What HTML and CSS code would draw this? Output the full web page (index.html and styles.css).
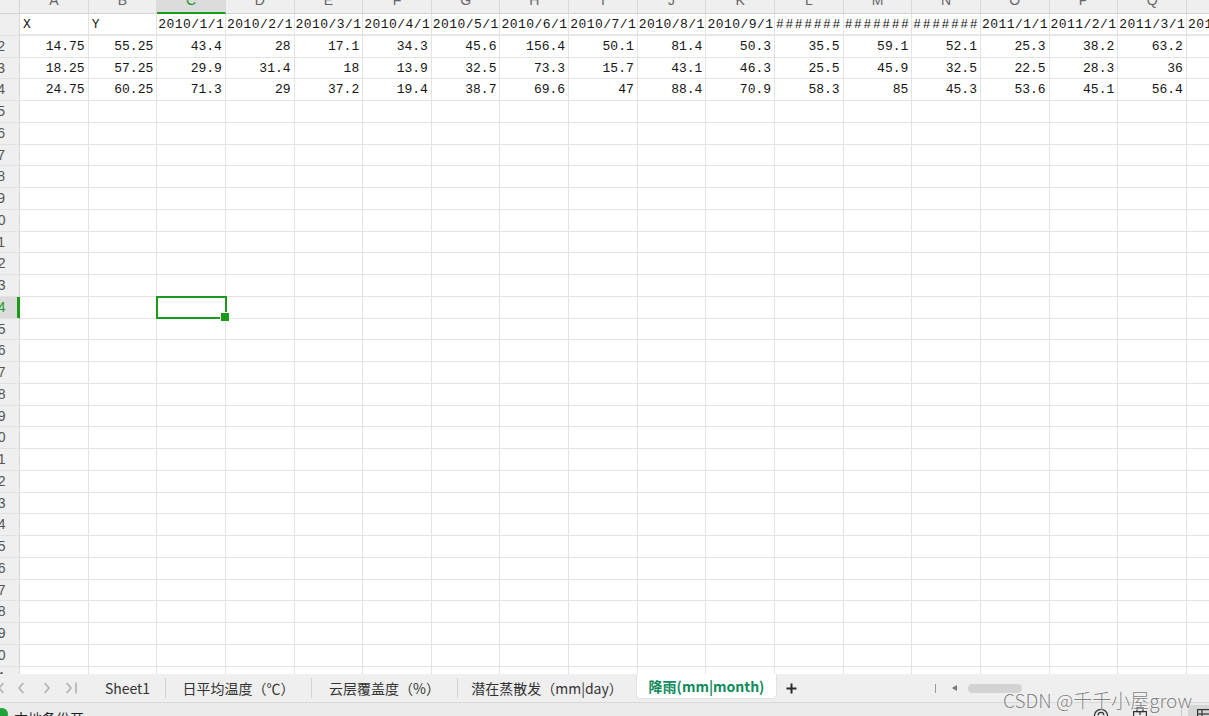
FILE: index.html
```html
<!DOCTYPE html>
<html lang="zh-CN">
<head>
<meta charset="utf-8">
<title>降雨(mm|month)</title>
<link rel="stylesheet" href="styles.css">
</head>
<body>
<div class="app">
  <div class="sheet">
    <div class="grid">
      <div class="row head"><span class="rh corner"></span><span class="c ch">A</span><span class="c ch">B</span><span class="c ch on">C</span><span class="c ch">D</span><span class="c ch">E</span><span class="c ch">F</span><span class="c ch">G</span><span class="c ch">H</span><span class="c ch">I</span><span class="c ch">J</span><span class="c ch">K</span><span class="c ch">L</span><span class="c ch">M</span><span class="c ch">N</span><span class="c ch">O</span><span class="c ch">P</span><span class="c ch">Q</span><span class="c ch">R</span></div>
      <div class="row r1"><span class="rh"></span><span class="c">X</span><span class="c">Y</span><span class="c d">2010/1/1</span><span class="c d">2010/2/1</span><span class="c d">2010/3/1</span><span class="c d">2010/4/1</span><span class="c d">2010/5/1</span><span class="c d">2010/6/1</span><span class="c d">2010/7/1</span><span class="c d">2010/8/1</span><span class="c d">2010/9/1</span><span class="c hash">#######</span><span class="c hash">#######</span><span class="c hash">#######</span><span class="c d">2011/1/1</span><span class="c d">2011/2/1</span><span class="c d">2011/3/1</span><span class="c d">2011/4/1</span></div>
      <div class="row"><span class="rh">2</span><span class="c n">14.75</span><span class="c n">55.25</span><span class="c n">43.4</span><span class="c n">28</span><span class="c n">17.1</span><span class="c n">34.3</span><span class="c n">45.6</span><span class="c n">156.4</span><span class="c n">50.1</span><span class="c n">81.4</span><span class="c n">50.3</span><span class="c n">35.5</span><span class="c n">59.1</span><span class="c n">52.1</span><span class="c n">25.3</span><span class="c n">38.2</span><span class="c n">63.2</span><span class="c n"></span></div>
      <div class="row"><span class="rh">3</span><span class="c n">18.25</span><span class="c n">57.25</span><span class="c n">29.9</span><span class="c n">31.4</span><span class="c n">18</span><span class="c n">13.9</span><span class="c n">32.5</span><span class="c n">73.3</span><span class="c n">15.7</span><span class="c n">43.1</span><span class="c n">46.3</span><span class="c n">25.5</span><span class="c n">45.9</span><span class="c n">32.5</span><span class="c n">22.5</span><span class="c n">28.3</span><span class="c n">36</span><span class="c n"></span></div>
      <div class="row"><span class="rh">4</span><span class="c n">24.75</span><span class="c n">60.25</span><span class="c n">71.3</span><span class="c n">29</span><span class="c n">37.2</span><span class="c n">19.4</span><span class="c n">38.7</span><span class="c n">69.6</span><span class="c n">47</span><span class="c n">88.4</span><span class="c n">70.9</span><span class="c n">58.3</span><span class="c n">85</span><span class="c n">45.3</span><span class="c n">53.6</span><span class="c n">45.1</span><span class="c n">56.4</span><span class="c n"></span></div>
      <div class="row"><span class="rh">5</span><span class="c"></span><span class="c"></span><span class="c"></span><span class="c"></span><span class="c"></span><span class="c"></span><span class="c"></span><span class="c"></span><span class="c"></span><span class="c"></span><span class="c"></span><span class="c"></span><span class="c"></span><span class="c"></span><span class="c"></span><span class="c"></span><span class="c"></span><span class="c"></span></div>
      <div class="row"><span class="rh">6</span><span class="c"></span><span class="c"></span><span class="c"></span><span class="c"></span><span class="c"></span><span class="c"></span><span class="c"></span><span class="c"></span><span class="c"></span><span class="c"></span><span class="c"></span><span class="c"></span><span class="c"></span><span class="c"></span><span class="c"></span><span class="c"></span><span class="c"></span><span class="c"></span></div>
      <div class="row"><span class="rh">7</span><span class="c"></span><span class="c"></span><span class="c"></span><span class="c"></span><span class="c"></span><span class="c"></span><span class="c"></span><span class="c"></span><span class="c"></span><span class="c"></span><span class="c"></span><span class="c"></span><span class="c"></span><span class="c"></span><span class="c"></span><span class="c"></span><span class="c"></span><span class="c"></span></div>
      <div class="row"><span class="rh">8</span><span class="c"></span><span class="c"></span><span class="c"></span><span class="c"></span><span class="c"></span><span class="c"></span><span class="c"></span><span class="c"></span><span class="c"></span><span class="c"></span><span class="c"></span><span class="c"></span><span class="c"></span><span class="c"></span><span class="c"></span><span class="c"></span><span class="c"></span><span class="c"></span></div>
      <div class="row"><span class="rh">9</span><span class="c"></span><span class="c"></span><span class="c"></span><span class="c"></span><span class="c"></span><span class="c"></span><span class="c"></span><span class="c"></span><span class="c"></span><span class="c"></span><span class="c"></span><span class="c"></span><span class="c"></span><span class="c"></span><span class="c"></span><span class="c"></span><span class="c"></span><span class="c"></span></div>
      <div class="row"><span class="rh">10</span><span class="c"></span><span class="c"></span><span class="c"></span><span class="c"></span><span class="c"></span><span class="c"></span><span class="c"></span><span class="c"></span><span class="c"></span><span class="c"></span><span class="c"></span><span class="c"></span><span class="c"></span><span class="c"></span><span class="c"></span><span class="c"></span><span class="c"></span><span class="c"></span></div>
      <div class="row"><span class="rh">11</span><span class="c"></span><span class="c"></span><span class="c"></span><span class="c"></span><span class="c"></span><span class="c"></span><span class="c"></span><span class="c"></span><span class="c"></span><span class="c"></span><span class="c"></span><span class="c"></span><span class="c"></span><span class="c"></span><span class="c"></span><span class="c"></span><span class="c"></span><span class="c"></span></div>
      <div class="row"><span class="rh">12</span><span class="c"></span><span class="c"></span><span class="c"></span><span class="c"></span><span class="c"></span><span class="c"></span><span class="c"></span><span class="c"></span><span class="c"></span><span class="c"></span><span class="c"></span><span class="c"></span><span class="c"></span><span class="c"></span><span class="c"></span><span class="c"></span><span class="c"></span><span class="c"></span></div>
      <div class="row"><span class="rh">13</span><span class="c"></span><span class="c"></span><span class="c"></span><span class="c"></span><span class="c"></span><span class="c"></span><span class="c"></span><span class="c"></span><span class="c"></span><span class="c"></span><span class="c"></span><span class="c"></span><span class="c"></span><span class="c"></span><span class="c"></span><span class="c"></span><span class="c"></span><span class="c"></span></div>
      <div class="row"><span class="rh on">14</span><span class="c"></span><span class="c"></span><span class="c sel"></span><span class="c"></span><span class="c"></span><span class="c"></span><span class="c"></span><span class="c"></span><span class="c"></span><span class="c"></span><span class="c"></span><span class="c"></span><span class="c"></span><span class="c"></span><span class="c"></span><span class="c"></span><span class="c"></span><span class="c"></span></div>
      <div class="row"><span class="rh">15</span><span class="c"></span><span class="c"></span><span class="c"></span><span class="c"></span><span class="c"></span><span class="c"></span><span class="c"></span><span class="c"></span><span class="c"></span><span class="c"></span><span class="c"></span><span class="c"></span><span class="c"></span><span class="c"></span><span class="c"></span><span class="c"></span><span class="c"></span><span class="c"></span></div>
      <div class="row"><span class="rh">16</span><span class="c"></span><span class="c"></span><span class="c"></span><span class="c"></span><span class="c"></span><span class="c"></span><span class="c"></span><span class="c"></span><span class="c"></span><span class="c"></span><span class="c"></span><span class="c"></span><span class="c"></span><span class="c"></span><span class="c"></span><span class="c"></span><span class="c"></span><span class="c"></span></div>
      <div class="row"><span class="rh">17</span><span class="c"></span><span class="c"></span><span class="c"></span><span class="c"></span><span class="c"></span><span class="c"></span><span class="c"></span><span class="c"></span><span class="c"></span><span class="c"></span><span class="c"></span><span class="c"></span><span class="c"></span><span class="c"></span><span class="c"></span><span class="c"></span><span class="c"></span><span class="c"></span></div>
      <div class="row"><span class="rh">18</span><span class="c"></span><span class="c"></span><span class="c"></span><span class="c"></span><span class="c"></span><span class="c"></span><span class="c"></span><span class="c"></span><span class="c"></span><span class="c"></span><span class="c"></span><span class="c"></span><span class="c"></span><span class="c"></span><span class="c"></span><span class="c"></span><span class="c"></span><span class="c"></span></div>
      <div class="row"><span class="rh">19</span><span class="c"></span><span class="c"></span><span class="c"></span><span class="c"></span><span class="c"></span><span class="c"></span><span class="c"></span><span class="c"></span><span class="c"></span><span class="c"></span><span class="c"></span><span class="c"></span><span class="c"></span><span class="c"></span><span class="c"></span><span class="c"></span><span class="c"></span><span class="c"></span></div>
      <div class="row"><span class="rh">20</span><span class="c"></span><span class="c"></span><span class="c"></span><span class="c"></span><span class="c"></span><span class="c"></span><span class="c"></span><span class="c"></span><span class="c"></span><span class="c"></span><span class="c"></span><span class="c"></span><span class="c"></span><span class="c"></span><span class="c"></span><span class="c"></span><span class="c"></span><span class="c"></span></div>
      <div class="row"><span class="rh">21</span><span class="c"></span><span class="c"></span><span class="c"></span><span class="c"></span><span class="c"></span><span class="c"></span><span class="c"></span><span class="c"></span><span class="c"></span><span class="c"></span><span class="c"></span><span class="c"></span><span class="c"></span><span class="c"></span><span class="c"></span><span class="c"></span><span class="c"></span><span class="c"></span></div>
      <div class="row"><span class="rh">22</span><span class="c"></span><span class="c"></span><span class="c"></span><span class="c"></span><span class="c"></span><span class="c"></span><span class="c"></span><span class="c"></span><span class="c"></span><span class="c"></span><span class="c"></span><span class="c"></span><span class="c"></span><span class="c"></span><span class="c"></span><span class="c"></span><span class="c"></span><span class="c"></span></div>
      <div class="row"><span class="rh">23</span><span class="c"></span><span class="c"></span><span class="c"></span><span class="c"></span><span class="c"></span><span class="c"></span><span class="c"></span><span class="c"></span><span class="c"></span><span class="c"></span><span class="c"></span><span class="c"></span><span class="c"></span><span class="c"></span><span class="c"></span><span class="c"></span><span class="c"></span><span class="c"></span></div>
      <div class="row"><span class="rh">24</span><span class="c"></span><span class="c"></span><span class="c"></span><span class="c"></span><span class="c"></span><span class="c"></span><span class="c"></span><span class="c"></span><span class="c"></span><span class="c"></span><span class="c"></span><span class="c"></span><span class="c"></span><span class="c"></span><span class="c"></span><span class="c"></span><span class="c"></span><span class="c"></span></div>
      <div class="row"><span class="rh">25</span><span class="c"></span><span class="c"></span><span class="c"></span><span class="c"></span><span class="c"></span><span class="c"></span><span class="c"></span><span class="c"></span><span class="c"></span><span class="c"></span><span class="c"></span><span class="c"></span><span class="c"></span><span class="c"></span><span class="c"></span><span class="c"></span><span class="c"></span><span class="c"></span></div>
      <div class="row"><span class="rh">26</span><span class="c"></span><span class="c"></span><span class="c"></span><span class="c"></span><span class="c"></span><span class="c"></span><span class="c"></span><span class="c"></span><span class="c"></span><span class="c"></span><span class="c"></span><span class="c"></span><span class="c"></span><span class="c"></span><span class="c"></span><span class="c"></span><span class="c"></span><span class="c"></span></div>
      <div class="row"><span class="rh">27</span><span class="c"></span><span class="c"></span><span class="c"></span><span class="c"></span><span class="c"></span><span class="c"></span><span class="c"></span><span class="c"></span><span class="c"></span><span class="c"></span><span class="c"></span><span class="c"></span><span class="c"></span><span class="c"></span><span class="c"></span><span class="c"></span><span class="c"></span><span class="c"></span></div>
      <div class="row"><span class="rh">28</span><span class="c"></span><span class="c"></span><span class="c"></span><span class="c"></span><span class="c"></span><span class="c"></span><span class="c"></span><span class="c"></span><span class="c"></span><span class="c"></span><span class="c"></span><span class="c"></span><span class="c"></span><span class="c"></span><span class="c"></span><span class="c"></span><span class="c"></span><span class="c"></span></div>
      <div class="row"><span class="rh">29</span><span class="c"></span><span class="c"></span><span class="c"></span><span class="c"></span><span class="c"></span><span class="c"></span><span class="c"></span><span class="c"></span><span class="c"></span><span class="c"></span><span class="c"></span><span class="c"></span><span class="c"></span><span class="c"></span><span class="c"></span><span class="c"></span><span class="c"></span><span class="c"></span></div>
      <div class="row"><span class="rh">30</span><span class="c"></span><span class="c"></span><span class="c"></span><span class="c"></span><span class="c"></span><span class="c"></span><span class="c"></span><span class="c"></span><span class="c"></span><span class="c"></span><span class="c"></span><span class="c"></span><span class="c"></span><span class="c"></span><span class="c"></span><span class="c"></span><span class="c"></span><span class="c"></span></div>
      <div class="row"><span class="rh">31</span><span class="c"></span><span class="c"></span><span class="c"></span><span class="c"></span><span class="c"></span><span class="c"></span><span class="c"></span><span class="c"></span><span class="c"></span><span class="c"></span><span class="c"></span><span class="c"></span><span class="c"></span><span class="c"></span><span class="c"></span><span class="c"></span><span class="c"></span><span class="c"></span></div>
    </div>
  </div>

  <div class="tabbar">
    <svg class="nav" width="90" height="28" viewBox="0 0 90 28">
      <g fill="none" stroke="#b0b0b0" stroke-width="1.6" stroke-linecap="round" stroke-linejoin="round">
        <line x1="-6" y1="9" x2="-6" y2="19"/>
        <polyline points="3,9.5 -1,14 3,18.5"/>
        <polyline points="23,9.5 19,14 23,18.5"/>
        <polyline points="45,9.5 49,14 45,18.5"/>
        <polyline points="67,9.5 71,14 67,18.5"/>
        <line x1="76" y1="9" x2="76" y2="19"/>
      </g>
    </svg>
    <span class="tab w75">Sheet1</span>
    <span class="sep"></span>
    <span class="tab w145">日平均温度（℃）</span>
    <span class="sep"></span>
    <span class="tab w145">云层覆盖度（%）</span>
    <span class="sep"></span>
    <span class="tab w178">潜在蒸散发（mm|day）</span>
    <span class="tab active">降雨(mm|month)</span>
    <span class="plus">
      <svg width="11" height="11" viewBox="0 0 11 11"><path d="M5.5 0.5v10M0.5 5.5h10" stroke="#2a2a2a" stroke-width="2"/></svg>
    </span>
    <div class="scroll">
      <span class="vline"></span>
      <svg class="tri" width="5" height="6" viewBox="0 0 5 6"><path d="M5 0L0 3L5 6Z" fill="#777"/></svg>
      <span class="thumb"></span>
    </div>
  </div>

  <div class="status">
    <span class="dot"></span>
    <span class="stext">本地备份开</span>
    <div class="sright">
      <svg class="ic-ring" width="16" height="16" viewBox="0 0 16 16"><g fill="none" stroke="#333" stroke-width="1.3"><circle cx="8" cy="8" r="6.6"/><path d="M5.2 7.2a2.8 2.8 0 0 1 5.6 0"/></g></svg>
      <svg class="ic-box" width="14" height="16" viewBox="0 0 14 16"><g fill="none" stroke="#333" stroke-width="1.2"><rect x="4" y="0.6" width="6" height="4"/><rect x="0.6" y="4.6" width="12.8" height="10"/><line x1="7" y1="4.6" x2="7" y2="8"/></g></svg>
      <span class="sdiv"></span>
      <span class="view">
        <svg width="14" height="14" viewBox="0 0 14 14"><g fill="none" stroke="#333" stroke-width="1.2"><rect x="0.6" y="0.6" width="12.8" height="12.8"/><line x1="0.6" y1="5" x2="13.4" y2="5"/><line x1="5" y1="0.6" x2="5" y2="13.4"/></g></svg>
      </span>
    </div>
  </div>

  <div class="wm">CSDN @千千小屋grow</div>
</div>
</body>
</html>
```

FILE: styles.css
```css
* { box-sizing: border-box; }

html, body {
  margin: 0;
  padding: 0;
}

body {
  width: 1209px;
  height: 716px;
  overflow: hidden;
  background: #ffffff;
  font-family: "Liberation Sans", "Noto Sans CJK SC", sans-serif;
}

.app {
  position: relative;
  display: flex;
  flex-direction: column;
  height: 716px;
}

/* ---------- sheet grid ---------- */
.sheet {
  flex: none;
  height: 674px;
  overflow: hidden;
  background: #ffffff;
}

.grid {
  margin: -12px 0 0 -10px;
}

.row {
  display: flex;
  height: 21.75px;
}

.row.head {
  height: 26px;
}

.rh {
  flex: none;
  width: 30px;
  background: #efefef;
  border-right: 1px solid #d6d6d6;
  border-bottom: 1px solid #e2e2e2;
  color: #555555;
  font-family: "Liberation Sans", sans-serif;
  font-size: 14px;
  line-height: 21px;
  text-align: right;
  padding-right: 14px;
  white-space: nowrap;
}

.rh.corner {
  border-bottom-color: #d4d4d4;
}

.rh.on {
  background: #dcdcdc;
  color: #1a9b1a;
  border-right-color: #1a9b1a;
  box-shadow: inset -2px 0 0 #1a9b1a;
}

.c {
  flex: none;
  width: 68.65px;
  border-right: 1px solid #e3e3e3;
  border-bottom: 1px solid #e3e3e3;
  font-family: "Liberation Mono", "DejaVu Sans Mono", monospace;
  font-size: 13px;
  line-height: 21px;
  color: #151515;
  white-space: nowrap;
  overflow: hidden;
  padding: 0 3px;
}

.c.ch {
  background: #efefef;
  border-right-color: #dadada;
  border-bottom: 1px solid #d4d4d4;
  font-family: "Liberation Sans", sans-serif;
  font-size: 14px;
  line-height: 25px;
  color: #666666;
  text-align: center;
}

.c.ch.on {
  background: #dcdcdc;
  color: #1a9b1a;
  border-bottom: 2px solid #1a9b1a;
}

.r1 .c {
  border-bottom: 2px solid #e6e6e6;
}

.c.d {
  padding-left: 1px;
  letter-spacing: 0.45px;
}

.c.hash {
  padding-left: 1px;
  letter-spacing: 1.6px;
}

.c.n {
  text-align: right;
  padding-right: 3px;
}

.c.sel {
  position: relative;
  overflow: visible;
}

.c.sel::after {
  content: "";
  position: absolute;
  z-index: 2;
  top: -1px;
  left: -1px;
  right: -2px;
  bottom: -1px;
  border: 2px solid #1a9b1a;
}

.c.sel::before {
  content: "";
  position: absolute;
  z-index: 3;
  right: -5px;
  bottom: -4px;
  width: 8px;
  height: 8px;
  background: #1a9b1a;
  border: 1px solid #ffffff;
}

/* ---------- sheet tabs ---------- */
.tabbar {
  flex: none;
  height: 29px;
  display: flex;
  align-items: flex-start;
  background: #efefef;
  border-bottom: 1px solid #d8d8d8;
  font-family: "Noto Sans CJK SC", sans-serif;
  font-size: 14px;
  color: #333333;
}

.nav {
  flex: none;
  display: block;
}

.tab {
  flex: none;
  height: 28px;
  line-height: 28px;
  text-align: center;
  white-space: nowrap;
}

.w75 { width: 75px; }
.w145 { width: 145px; }
.w178 { width: 178px; }

.sep {
  flex: none;
  width: 1px;
  height: 20px;
  margin-top: 4px;
  background: #d2d2d2;
}

.tab.active {
  width: 141px;
  height: 25px;
  line-height: 25px;
  background: #ffffff;
  color: #118a5c;
  font-weight: 600;
  border: 1px solid #e2e2e2;
  border-top: none;
  border-radius: 0 0 5px 5px;
}

.plus {
  flex: none;
  width: 28px;
  height: 28px;
  display: flex;
  align-items: center;
  justify-content: center;
}

.scroll {
  flex: none;
  margin-left: auto;
  width: 274px;
  height: 28px;
  display: flex;
  align-items: center;
}

.vline {
  width: 1px;
  height: 9px;
  background: #9a9a9a;
}

.tri {
  margin-left: 16px;
  display: block;
}

.thumb {
  margin-left: 11px;
  width: 54px;
  height: 9px;
  border-radius: 5px;
  background: #d3d3d3;
}

/* ---------- status bar ---------- */
.status {
  flex: none;
  height: 30px;
  display: flex;
  align-items: flex-start;
  background: #ebebeb;
  padding-top: 5px;
  font-family: "Noto Sans CJK SC", sans-serif;
  font-size: 14px;
  color: #222222;
}

.dot {
  flex: none;
  width: 12px;
  height: 12px;
  margin-left: -4px;
  margin-right: 6px;
  border-radius: 50%;
  background: #22a33a;
}

.stext {
  line-height: 20px;
}

.sright {
  margin-left: auto;
  display: flex;
  align-items: flex-start;
}

.ic-ring {
  display: block;
}

.ic-box {
  display: block;
  margin-left: 24px;
  margin-top: -1px;
}

.sdiv {
  width: 1px;
  height: 16px;
  margin-left: 34px;
  background: #c8c8c8;
}

.view {
  width: 21px;
  height: 30px;
  margin-left: 6px;
  margin-top: -3px;
  padding: 4px 0 0 9px;
  background: #d5d5d5;
}

.view svg {
  display: block;
}

/* ---------- watermark ---------- */
.wm {
  position: absolute;
  left: 1003px;
  top: 687px;
  font-family: "Noto Sans CJK SC", sans-serif;
  font-size: 19px;
  font-weight: 300;
  line-height: 26px;
  color: #828282;
  white-space: nowrap;
  text-shadow: 0 0 2px #ffffff, 0 0 1px #ffffff;
}
```
